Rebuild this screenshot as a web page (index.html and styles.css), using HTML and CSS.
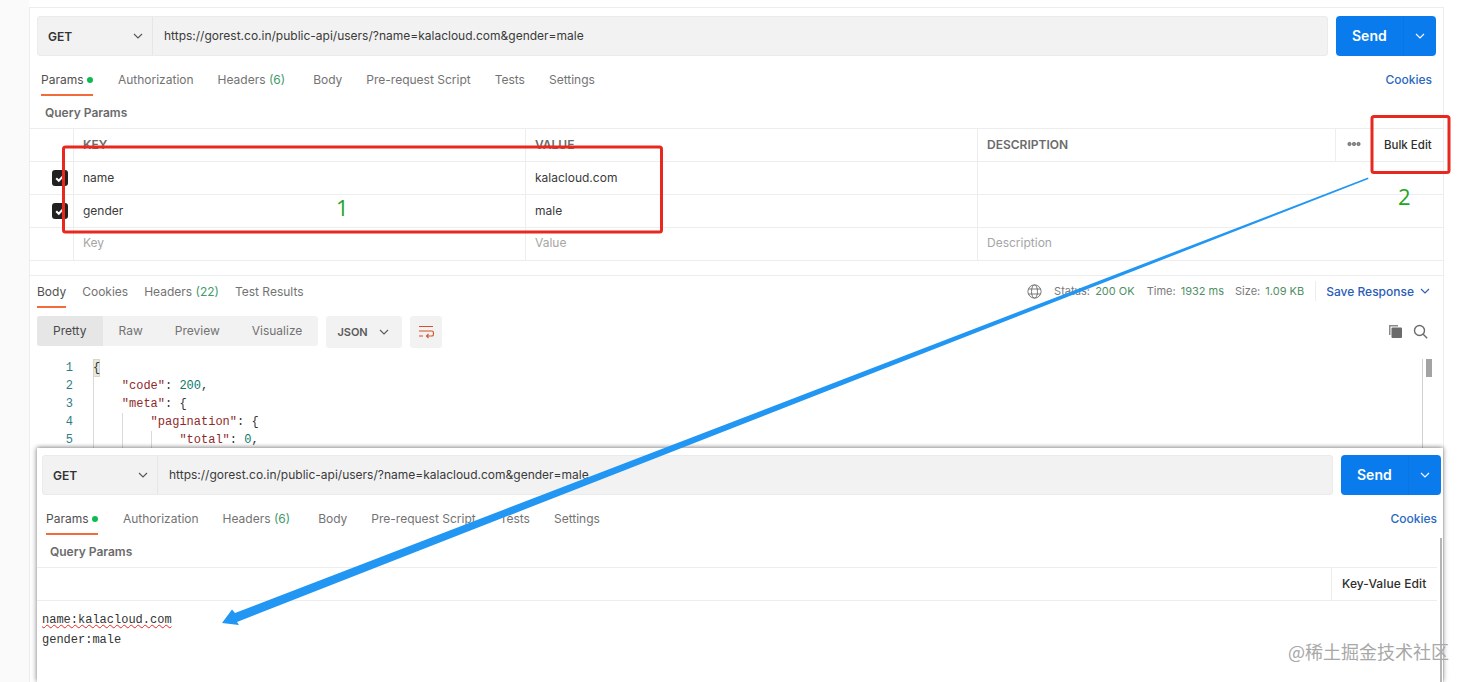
FILE: index.html
```html
<!DOCTYPE html>
<html>
<head>
  <meta charset="UTF-8">
  <title>Postman bulk edit</title>
  <link rel="stylesheet" href="styles.css">
</head>
<body>
  <svg class="defs" width="0" height="0">
    <symbol id="chev" viewBox="0 0 12 12"><path d="M2 4l4 4 4-4" fill="none" stroke="currentColor" stroke-width="1.1"/></symbol>
  </svg>

  <div class="page">
    <div class="panel">
      <!-- Barra de la peticion -->
      <div class="request-bar">
        <div class="url-box">
          <div class="method"><span>GET</span><svg class="chev"><use href="#chev"/></svg></div>
          <div class="url">https://gorest.co.in/public-api/users/?name=kalacloud.com&amp;gender=male</div>
        </div>
        <div class="send"><span class="send-label">Send</span><span class="send-more"><svg class="chev"><use href="#chev"/></svg></span></div>
      </div>

      <div class="tabs req-tabs">
        <div class="tab active">Params <i class="dot"></i></div>
        <div class="tab">Authorization</div>
        <div class="tab tab-headers">Headers <em>(6)</em></div>
        <div class="tab">Body</div>
        <div class="tab">Pre-request Script</div>
        <div class="tab">Tests</div>
        <div class="tab">Settings</div>
        <div class="cookies">Cookies</div>
      </div>
      <div class="query-title">Query Params</div>

      <!-- Tabla de parametros -->
      <div class="params">
        <div class="row head">
          <div class="cell check"></div>
          <div class="cell">KEY</div>
          <div class="cell">VALUE</div>
          <div class="cell">DESCRIPTION</div>
          <div class="cell dots"><svg width="14" height="6" viewBox="0 0 14 6"><circle cx="2.5" cy="3" r="1.7"/><circle cx="7" cy="3" r="1.7"/><circle cx="11.5" cy="3" r="1.7"/></svg></div>
          <div class="cell bulk">Bulk Edit</div>
        </div>
        <div class="row">
          <div class="cell check"><span class="box"><svg width="12" height="12" viewBox="0 0 12 12"><path d="M2.2 6.2l2.6 2.6 5-5.4" fill="none" stroke="#fff" stroke-width="2"/></svg></span></div>
          <div class="cell">name</div>
          <div class="cell">kalacloud.com</div>
          <div class="cell span-end"></div>
        </div>
        <div class="row">
          <div class="cell check"><span class="box"><svg width="12" height="12" viewBox="0 0 12 12"><path d="M2.2 6.2l2.6 2.6 5-5.4" fill="none" stroke="#fff" stroke-width="2"/></svg></span></div>
          <div class="cell">gender</div>
          <div class="cell">male</div>
          <div class="cell span-end"></div>
        </div>
        <div class="row empty">
          <div class="cell check"></div>
          <div class="cell">Key</div>
          <div class="cell">Value</div>
          <div class="cell span-end">Description</div>
        </div>
      </div>

      <!-- Respuesta -->
      <div class="response">
        <div class="response-head">
          <div class="tabs res-tabs">
            <div class="tab active">Body</div>
            <div class="tab">Cookies</div>
            <div class="tab">Headers <em>(22)</em></div>
            <div class="tab">Test Results</div>
          </div>
          <div class="meta">
            <svg class="globe" width="15" height="15" viewBox="0 0 15 15" fill="none" stroke="#6b6b6b" stroke-width="0.9"><circle cx="7.5" cy="7.5" r="6.6"/><ellipse cx="7.5" cy="7.5" rx="3" ry="6.6"/><path d="M1.4 5h12.2M1.4 10h12.2"/></svg>
            <span class="stat stat-status">Status: <b>200 OK</b></span>
            <span class="stat stat-time">Time: <b>1932 ms</b></span>
            <span class="stat stat-size">Size: <b>1.09 KB</b></span>
            <span class="save">Save Response <svg class="chev"><use href="#chev"/></svg></span>
          </div>
        </div>

        <div class="toolbar">
          <div class="segments">
            <div class="segment active">Pretty</div>
            <div class="segment">Raw</div>
            <div class="segment">Preview</div>
            <div class="segment">Visualize</div>
          </div>
          <div class="format">JSON <svg class="chev"><use href="#chev"/></svg></div>
          <div class="wrap-btn">
            <svg width="16" height="16" viewBox="0 0 16 16" fill="none" stroke="#d4532b" stroke-width="1.1"><path d="M1 2.5h14M1 7h13c2 0 2 5 0 5H8.5M10.5 10L8.5 12l2 2M1 12h4"/></svg>
          </div>
          <div class="res-actions">
            <svg width="15" height="15" viewBox="0 0 15 15"><path d="M1 1h9v1.5H2.500V11H1z" fill="#8a8a8a"/><rect x="3.500" y="3.500" width="10.500" height="10.500" rx="1" fill="#6b6b6b"/></svg>
            <svg width="15" height="15" viewBox="0 0 15 15" fill="none" stroke="#6b6b6b" stroke-width="1.4"><circle cx="6.500" cy="6.500" r="5"/><path d="M10.200 10.200l4 4"/></svg>
          </div>
        </div>

        <div class="editor">
          <div class="gutter">
            <div>1</div><div>2</div><div>3</div><div>4</div><div>5</div>
          </div>
          <div class="code">
            <div class="line"><span class="cursor">{</span></div>
            <div class="line"><i class="guide"></i><s>"code"</s>: <u>200</u>,</div>
            <div class="line"><i class="guide"></i><s>"meta"</s>: {</div>
            <div class="line"><i class="guide"></i><i class="guide"></i><s>"pagination"</s>: {</div>
            <div class="line"><i class="guide"></i><i class="guide"></i><i class="guide"></i><s>"total"</s>: <u>0</u>,</div>
          </div>
          <div class="scroll-track"><div class="scroll-thumb"></div></div>
        </div>
      </div>
    </div>

    <!-- Segunda captura pegada encima -->
    <div class="overlay">
      <div class="request-bar">
        <div class="url-box">
          <div class="method"><span>GET</span><svg class="chev"><use href="#chev"/></svg></div>
          <div class="url">https://gorest.co.in/public-api/users/?name=kalacloud.com&amp;gender=male</div>
        </div>
        <div class="send"><span class="send-label">Send</span><span class="send-more"><svg class="chev"><use href="#chev"/></svg></span></div>
      </div>
      <div class="tabs req-tabs">
        <div class="tab active">Params <i class="dot"></i></div>
        <div class="tab">Authorization</div>
        <div class="tab tab-headers">Headers <em>(6)</em></div>
        <div class="tab">Body</div>
        <div class="tab">Pre-request Script</div>
        <div class="tab">Tests</div>
        <div class="tab">Settings</div>
        <div class="cookies">Cookies</div>
      </div>
      <div class="query-title">Query Params</div>
      <div class="bulk-head"><div class="kv-edit">Key-Value Edit</div></div>
      <div class="bulk-text">
        <div class="typo">name:kalacloud.com</div>
        <div>gender:male</div>
      </div>
      <div class="overlay-scroll"></div>
    </div>

    <!-- Anotaciones -->
    <svg class="notes" width="1468" height="682" viewBox="0 0 1468 682">
      <rect x="63.500" y="147" width="598" height="85" rx="2" fill="none" stroke="#e8281e" stroke-width="3"/>
      <rect x="1372" y="116.500" width="77" height="56" rx="2" fill="none" stroke="#e8281e" stroke-width="3"/>
      <polygon points="1368,177.500 235,613 232,609.500 222,623 239,625 237,622 1368.500,179" fill="#2196f3"/>
    </svg>
    <div class="num num-one">1</div>
    <div class="num num-two">2</div>
    <div class="watermark">@稀土掘金技术社区</div>
  </div>
</body>
</html>
```

FILE: styles.css
```css
/* Base */
* {
  box-sizing: border-box;
}

body {
  margin: 0;
  background-color: #fff;
  font-family: Inter, "Liberation Sans", sans-serif;
  font-size: 12px;
  color: #6b6b6b;
}

.defs {
  display: block;
  position: absolute;
}

.page {
  position: relative;
  width: 1468px;
  height: 682px;
  overflow: hidden;
  background: linear-gradient(to right, #fafafa 29px, #fff 29px);
}

.chev {
  width: 12px;
  height: 12px;
}

/* Panel principal */
.panel {
  width: 1415px;
  height: 675px;
  margin: 7px 0 0 29px;
  padding-top: 8px;
  background-color: #fff;
  border-top: 1px solid #ededed;
  border-left: 1px solid #ededed;
  border-right: 1px solid #ededed;
}

.request-bar {
  display: flex;
  gap: 8px;
  padding-left: 7px;
}

.url-box {
  display: flex;
  width: 1291px;
  height: 40px;
  background-color: #f2f2f2;
  border: 1px solid #ebebeb;
  border-radius: 3px;
  color: #3a3a3a;
}

.method {
  display: flex;
  align-items: center;
  justify-content: space-between;
  width: 115px;
  padding: 0 8px 0 10px;
  border-right: 1px solid #e6e6e6;
  font-weight: 600;
  color: #333;
}

.method .chev {
  color: #555;
}

.url {
  padding: 0 11px;
  line-height: 37px;
}

.send {
  display: flex;
  width: 100px;
  height: 40px;
  background-color: #097bed;
  border-radius: 4px;
  color: #fff;
}

.send-label {
  width: 67px;
  padding-left: 16px;
  font-size: 14px;
  font-weight: 600;
  line-height: 40px;
}

.send-more {
  display: flex;
  align-items: center;
  justify-content: center;
  flex: 1;
  border-left: 1px solid #0a74e0;
}

/* Pestanas */
.tabs {
  display: flex;
}

.req-tabs {
  gap: 24px;
  margin-top: 12px;
  padding: 0 11px 0 11px;
}

.req-tabs .tab.active {
  margin-right: 1px;
}

.tab {
  height: 28px;
  line-height: 24px;
  border-bottom: 2px solid transparent;
  color: #737373;
  white-space: nowrap;
}

.tab em {
  font-style: normal;
  color: #3f9a6c;
}

.tab.active {
  color: #505050;
  border-bottom-color: #f26b3a;
}

.tab-headers {
  margin-right: 4px;
}

.dot {
  display: inline-block;
  width: 6px;
  height: 6px;
  vertical-align: 1px;
  background-color: #0cbb52;
  border-radius: 50%;
}

.cookies {
  margin-left: auto;
  line-height: 24px;
  font-weight: 500;
  color: #2a68c4;
}

.query-title {
  height: 32px;
  padding: 1px 0 0 15px;
  line-height: 32px;
  font-weight: 600;
  color: #6b6b6b;
}

/* Tabla de parametros */
.params {
  border-top: 1px solid #ededed;
}

.row {
  display: grid;
  grid-template-columns: 43px 452px 452px 358px 37px 1fr;
  height: 33px;
  border-bottom: 1px solid #ededed;
  color: #3a3a3a;
}

.cell {
  display: flex;
  align-items: center;
  padding: 0 0 2px 9px;
  border-left: 1px solid #ededed;
}

.cell.check {
  justify-content: center;
  padding: 0 0 0 17px;
  border-left: 0;
}

.span-end {
  grid-column: 4 / 7;
}

.head .cell {
  font-weight: 600;
  color: #6b6b6b;
}

.head .dots {
  padding-left: 11px;
}

.dots circle {
  fill: #8c8c8c;
  stroke: #555;
  stroke-width: 0.6;
}

.head .bulk {
  padding: 0 0 0 12px;
  border-left: 0;
  font-size: 11.5px;
  font-weight: 500;
  color: #2e2e2e;
}

.box {
  display: flex;
  align-items: center;
  justify-content: center;
  width: 16px;
  height: 16px;
  background-color: #212121;
  border-radius: 3px;
}

.empty {
  color: #a6a6a6;
}

.empty .cell {
  padding-bottom: 4px;
}

/* Respuesta */
.response {
  margin-top: 14px;
  padding-left: 7px;
  border-top: 1px solid #ededed;
}

.response-head {
  display: flex;
  justify-content: space-between;
}

.res-tabs {
  gap: 16px;
}

.res-tabs .tab {
  height: 32px;
  padding-top: 4px;
}

.meta {
  display: flex;
  align-items: center;
  height: 30px;
  padding-right: 12px;
  font-size: 11px;
  color: #7a7a7a;
}

.stat b {
  margin-left: 2px;
  font-weight: 400;
  color: #4f8f63;
}

.globe {
  margin-right: 12px;
}

.stat-status {
  margin-right: 12px;
}

.stat-time {
  margin-right: 11px;
}

.stat-size {
  padding-right: 11px;
  border-right: 1px solid #ededed;
  line-height: 20px;
}

.save {
  display: flex;
  align-items: center;
  gap: 5px;
  margin-left: 10px;
  font-size: 12px;
  font-weight: 500;
  color: #2a5cb8;
}

.toolbar {
  display: flex;
  gap: 8px;
  height: 32px;
  margin-top: 8px;
  padding-right: 15px;
}

.segments {
  display: flex;
  height: 30px;
  background-color: #f2f2f2;
  border-radius: 3px;
}

.segment {
  padding: 0 16px;
  line-height: 29px;
  color: #737373;
}

.segment.active {
  background-color: #e6e6e6;
  border-radius: 3px 0 0 3px;
  color: #4a4a4a;
}

.format {
  display: flex;
  align-items: center;
  justify-content: space-between;
  width: 76px;
  padding: 0 12px 0 11px;
  background-color: #f2f2f2;
  border-radius: 3px;
  font-size: 11px;
  font-weight: 600;
  color: #5a5a5a;
}

.wrap-btn {
  display: flex;
  align-items: center;
  justify-content: center;
  width: 32px;
  background-color: #f2f2f2;
  border-radius: 3px;
}

.res-actions {
  display: flex;
  align-items: center;
  gap: 10px;
  margin-left: auto;
  padding-bottom: 2px;
}

/* Editor */
.editor {
  display: flex;
  margin-top: 11px;
  font-family: "Liberation Mono", monospace;
  line-height: 18px;
}

.gutter {
  width: 36px;
  text-align: right;
  color: #2f7c85;
}

.code {
  width: 1329px;
  margin-left: 20px;
  color: #333;
}

.line {
  height: 18px;
  white-space: pre;
}

.line s {
  text-decoration: none;
  color: #8f2a2a;
}

.line u {
  text-decoration: none;
  color: #0a7a6a;
}

.guide {
  display: inline-block;
  width: 28.8px;
  height: 18px;
  vertical-align: top;
  border-left: 1px solid #d9d9d9;
}

.cursor {
  display: inline-block;
  background-color: #e8e8df;
  box-shadow: inset 0 0 0 1px #d6d6cc;
}

.scroll-track {
  width: 12px;
  height: 100px;
  border-left: 1px solid #d0d0d0;
  padding-left: 3px;
}

.scroll-thumb {
  width: 6px;
  height: 18px;
  background-color: #a3a3a3;
}

/* Segunda captura */
.overlay {
  position: absolute;
  left: 37px;
  top: 448px;
  width: 1406px;
  height: 234px;
  padding-top: 7px;
  background-color: #fff;
  box-shadow: 0 -1px 4px rgba(0, 0, 0, 0.3), 2px 0 5px rgba(0, 0, 0, 0.1), -2px 0 5px rgba(0, 0, 0, 0.16);
}

.overlay .request-bar {
  padding-left: 5px;
}

.overlay .req-tabs {
  padding: 0 6px 0 9px;
}

.overlay .query-title {
  padding-left: 13px;
}

.bulk-head {
  display: flex;
  justify-content: flex-end;
  width: 1400px;
  height: 34px;
  border-top: 1px solid #ededed;
  border-bottom: 1px solid #ededed;
}

.kv-edit {
  width: 106px;
  padding-left: 10px;
  border-left: 1px solid #ededed;
  line-height: 31px;
  font-weight: 500;
  letter-spacing: 0.1px;
  color: #2e2e2e;
}

.bulk-text {
  padding: 9px 0 0 5px;
  font-family: "Liberation Mono", monospace;
  line-height: 20px;
  color: #333;
}

.typo {
  text-decoration: underline wavy #e8281e 1px;
}

.overlay-scroll {
  position: absolute;
  right: 1px;
  top: 90px;
  width: 2px;
  height: 144px;
  background-color: #b5b5b5;
}

/* Anotaciones */
.notes {
  position: absolute;
  left: 0;
  top: 0;
}

.num {
  position: absolute;
  font-family: "Open Sans", sans-serif;
  font-size: 22px;
  line-height: 24px;
  color: #1fa51f;
}

.num-one {
  left: 336px;
  top: 195px;
}

.num-two {
  left: 1398px;
  top: 184px;
}

.watermark {
  position: absolute;
  left: 1288px;
  top: 638px;
  font-family: "Noto Sans CJK SC", sans-serif;
  font-size: 18px;
  line-height: 26px;
  color: #a8a8a8;
  white-space: nowrap;
}
```
